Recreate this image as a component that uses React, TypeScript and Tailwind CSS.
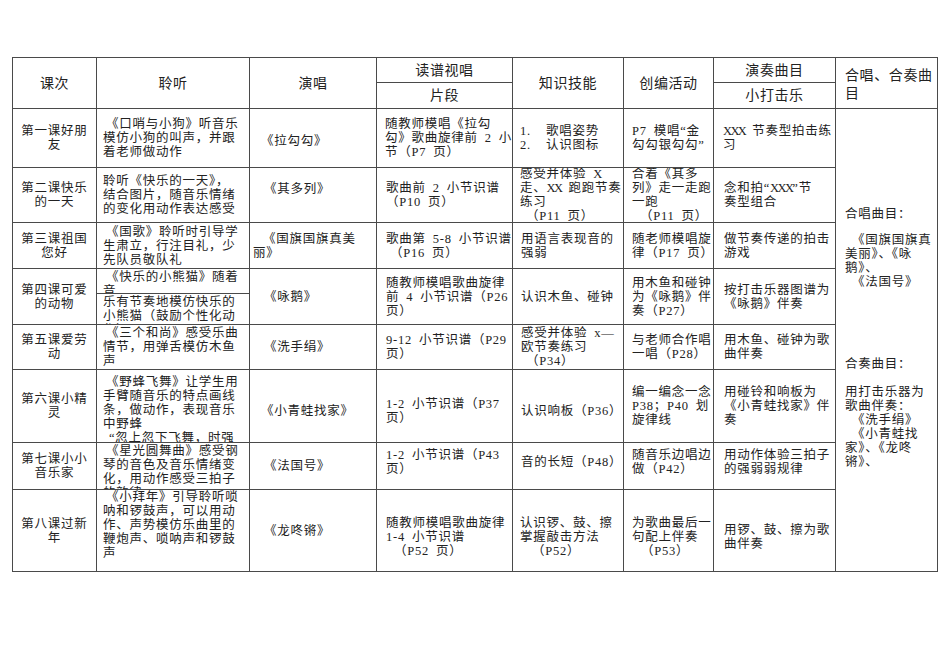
import React from "react";

/**
 * 一年级音乐教学进度表
 * Word-style table, fixed row heights, text clipped to cells
 */

// half-width spaces like the original document's font
const sp = (s: React.ReactNode) => (typeof s === "string" ? s.replace(/ /g, "\u2002") : s);
const E = "\u2002";

function L({ children, i = "" }: { children: React.ReactNode; i?: string }) {
  return <div className={`whitespace-nowrap ${i}`}>{sp(children)}</div>;
}

// narrow capital X, as in the document's half-width latin
function X({ children }: { children: string }) {
  return <span className="tracking-[-1.6px]">{children}</span>;
}

function C({
  className = "",
  children,
  center = false,
  top = false,
}: {
  className?: string;
  children: React.ReactNode;
  center?: boolean;
  top?: boolean;
}) {
  return (
    <div
      className={`flex flex-col overflow-hidden bg-white text-[12.5px] leading-[14px] tracking-[0.75px] ${
        top ? "justify-start" : "justify-center"
      } ${center ? "items-center text-center" : ""} ${className}`}
    >
      {children}
    </div>
  );
}

function H({ className = "", children }: { className?: string; children: React.ReactNode }) {
  return (
    <div className={`flex items-center justify-center bg-white text-[14px] tracking-[0.6px] ${className}`}>
      {children}
    </div>
  );
}

function Num({ n, children }: { n: string; children: React.ReactNode }) {
  return (
    <div className="flex whitespace-nowrap">
      <span className="w-[26px]">{n}</span>
      {children}
    </div>
  );
}

export default function App() {
  return (
    <div className="h-[672px] w-[950px] bg-white pl-[12px] pt-[57px] font-['Liberation_Serif','Noto_Sans_CJK_SC',serif] text-[#222]">
      <div className="grid w-[926px] grid-cols-[83px_152px_126px_135px_110px_89px_121px_101px] grid-rows-[24px_25px_58px_54px_45px_24px_30px_44px_72px_46px_81px] gap-px border border-[#4a4a4a] bg-[#4a4a4a]">
        {/* Header */}
        <H className="col-start-1 row-start-1 row-span-2">课次</H>
        <H className="col-start-2 row-start-1 row-span-2">聆听</H>
        <H className="col-start-3 row-start-1 row-span-2">演唱</H>
        <H className="col-start-4 row-start-1">读谱视唱</H>
        <H className="col-start-4 row-start-2">片段</H>
        <H className="col-start-5 row-start-1 row-span-2">知识技能</H>
        <H className="col-start-6 row-start-1 row-span-2">创编活动</H>
        <H className="col-start-7 row-start-1">演奏曲目</H>
        <H className="col-start-7 row-start-2">小打击乐</H>
        <div className="col-start-8 row-start-1 row-span-2 flex flex-col justify-center bg-white pl-[9px] pt-[4px] text-[14px] leading-[18px] tracking-[0.6px]">
          <L>合唱、合奏曲</L>
          <L>目</L>
        </div>

        {/* 第一课 */}
        <C className="col-start-1 row-start-3" center>
          <L>第一课好朋</L>
          <L>友</L>
        </C>
        <C className="col-start-2 row-start-3 pl-[6px]">
          <L i="pl-[3px]">《口哨与小狗》听音乐</L>
          <L>模仿小狗的叫声，并跟</L>
          <L>着老师做动作</L>
        </C>
        <C className="col-start-3 row-start-3 pl-[3px] pt-[6px]">
          <L i="pl-[8px]">《拉勾勾》</L>
        </C>
        <C className="col-start-4 row-start-3 pl-[8px]">
          <L>随教师模唱《拉勾</L>
          <L>勾》歌曲旋律前 2 小</L>
          <L>节（P7 页）</L>
        </C>
        <C className="col-start-5 row-start-3 pl-[7px]">
          <Num n="1.">歌唱姿势</Num>
          <Num n="2.">认识图标</Num>
        </C>
        <C className="col-start-6 row-start-3 pl-[8px]">
          <L>P7 模唱“金</L>
          <L>勾勾银勾勾”</L>
        </C>
        <C className="col-start-7 row-start-3 pl-[9px]">
          <L>
            <X>XXX</X>
            {E}节奏型拍击练
          </L>
          <L>习</L>
        </C>

        {/* 第二课 */}
        <C className="col-start-1 row-start-4" center>
          <L>第二课快乐</L>
          <L>的一天</L>
        </C>
        <C className="col-start-2 row-start-4 pl-[6px]">
          <L>聆听《快乐的一天》，</L>
          <L>结合图片，随音乐情绪</L>
          <L>的变化用动作表达感受</L>
        </C>
        <C className="col-start-3 row-start-4 pl-[3px] pb-[13px]">
          <L i="pl-[11px]">《其多列》</L>
        </C>
        <C className="col-start-4 row-start-4 pl-[9px]">
          <L>歌曲前 2 小节识谱</L>
          <L>（P10 页）</L>
        </C>
        <C className="col-start-5 row-start-4 pl-[7px]">
          <L>
            感受并体验{E}
            <X>X</X>
          </L>
          <L>
            走、<X>XX</X>
            {E}跑跑节奏
          </L>
          <L>练习</L>
          <L i="pl-[6px]">（P11 页）</L>
        </C>
        <C className="col-start-6 row-start-4 pl-[8px]">
          <L>合着《其多</L>
          <L>列》走一走跑</L>
          <L>一跑</L>
          <L i="pl-[8px]">（P11 页）</L>
        </C>
        <C className="col-start-7 row-start-4 pl-[10px]">
          <L>
            念和拍“<X>XXX</X>”节
          </L>
          <L>奏型组合</L>
        </C>

        {/* 第三课 */}
        <C className="col-start-1 row-start-5" center>
          <L>第三课祖国</L>
          <L>您好</L>
        </C>
        <C className="col-start-2 row-start-5 pl-[6px]">
          <L i="pl-[3px]">《国歌》聆听时引导学</L>
          <L>生肃立，行注目礼，少</L>
          <L>先队员敬队礼</L>
        </C>
        <C className="col-start-3 row-start-5 pl-[3px]">
          <L i="pl-[10px]">《国旗国旗真美</L>
          <L>丽》</L>
        </C>
        <C className="col-start-4 row-start-5 pl-[9px]">
          <L>歌曲第 5-8 小节识谱</L>
          <L i="pl-[4px]">（P16 页）</L>
        </C>
        <C className="col-start-5 row-start-5 pl-[8px]">
          <L>用语言表现音的</L>
          <L>强弱</L>
        </C>
        <C className="col-start-6 row-start-5 pl-[8px]">
          <L>随老师模唱旋</L>
          <L>律（P17 页）</L>
        </C>
        <C className="col-start-7 row-start-5 pl-[10px]">
          <L>做节奏传递的拍击</L>
          <L>游戏</L>
        </C>

        {/* 第四课 */}
        <C className="col-start-1 row-start-6 row-span-2" center>
          <L>第四课可爱</L>
          <L>的动物</L>
        </C>
        <C className="col-start-2 row-start-6 pl-[6px] pt-[1px]" top>
          <L i="pl-[3px]">《快乐的小熊猫》随着</L>
          <L>音</L>
        </C>
        <C className="col-start-2 row-start-7 pl-[6px] pt-[1px]" top>
          <L>乐有节奏地模仿快乐的</L>
          <L>小熊猫（鼓励个性化动</L>
          <L>作）</L>
        </C>
        <C className="col-start-3 row-start-6 row-span-2 pl-[3px]">
          <L i="pl-[11px]">《咏鹅》</L>
        </C>
        <C className="col-start-4 row-start-6 row-span-2 pl-[9px]">
          <L>随教师模唱歌曲旋律</L>
          <L>前 4 小节识谱（P26</L>
          <L>页）</L>
        </C>
        <C className="col-start-5 row-start-6 row-span-2 pl-[8px]">
          <L>认识木鱼、碰钟</L>
        </C>
        <C className="col-start-6 row-start-6 row-span-2 pl-[8px]">
          <L>用木鱼和碰钟</L>
          <L>为《咏鹅》伴</L>
          <L>奏（P27）</L>
        </C>
        <C className="col-start-7 row-start-6 row-span-2 pl-[10px]">
          <L>按打击乐器图谱为</L>
          <L>《咏鹅》伴奏</L>
        </C>

        {/* 第五课 */}
        <C className="col-start-1 row-start-8" center>
          <L>第五课爱劳</L>
          <L>动</L>
        </C>
        <C className="col-start-2 row-start-8 pl-[6px]">
          <L i="pl-[3px]">《三个和尚》感受乐曲</L>
          <L>情节，用弹舌模仿木鱼</L>
          <L>声</L>
        </C>
        <C className="col-start-3 row-start-8 pl-[3px]">
          <L i="pl-[11px]">《洗手绢》</L>
        </C>
        <C className="col-start-4 row-start-8 pl-[9px]">
          <L>9-12 小节识谱（P29</L>
          <L>页）</L>
        </C>
        <C className="col-start-5 row-start-8 pl-[8px]">
          <L>感受并体验 x—</L>
          <L>欧节奏练习</L>
          <L i="pl-[5px]">（P34）</L>
        </C>
        <C className="col-start-6 row-start-8 pl-[8px]">
          <L>与老师合作唱</L>
          <L>一唱（P28）</L>
        </C>
        <C className="col-start-7 row-start-8 pl-[10px]">
          <L>用木鱼、碰钟为歌</L>
          <L>曲伴奏</L>
        </C>

        {/* 第六课 */}
        <C className="col-start-1 row-start-9" center>
          <L>第六课小精</L>
          <L>灵</L>
        </C>
        <C className="col-start-2 row-start-9 pl-[6px] pt-[5px]" top>
          <L i="pl-[3px]">《野蜂飞舞》让学生用</L>
          <L>手臂随音乐的特点画线</L>
          <L>条，做动作，表现音乐</L>
          <L>中野蜂</L>
          <L i="pl-[6px]">“忽上忽下飞舞，时强</L>
        </C>
        <C className="col-start-3 row-start-9 pl-[3px] pt-[10px]">
          <L i="pl-[8px]">《小青蛙找家》</L>
        </C>
        <C className="col-start-4 row-start-9 pl-[9px] pt-[10px]">
          <L>1-2 小节识谱（P37</L>
          <L>页）</L>
        </C>
        <C className="col-start-5 row-start-9 pl-[8px] pt-[10px]">
          <L>认识响板（P36）</L>
        </C>
        <C className="col-start-6 row-start-9 pl-[8px]">
          <L>编一编念一念</L>
          <L>P38；P40 划</L>
          <L>旋律线</L>
        </C>
        <C className="col-start-7 row-start-9 pl-[10px]">
          <L>用碰铃和响板为</L>
          <L>《小青蛙找家》伴</L>
          <L>奏</L>
        </C>

        {/* 第七课 */}
        <C className="col-start-1 row-start-10" center>
          <L>第七课小小</L>
          <L>音乐家</L>
        </C>
        <C className="col-start-2 row-start-10 pl-[6px] pt-[1px]" top>
          <L i="pl-[3px]">《星光圆舞曲》感受钢</L>
          <L>琴的音色及音乐情绪变</L>
          <L>化，用动作感受三拍子</L>
          <L>的韵律。</L>
        </C>
        <C className="col-start-3 row-start-10 pl-[3px]">
          <L i="pl-[11px]">《法国号》</L>
        </C>
        <C className="col-start-4 row-start-10 pl-[9px] pb-[8px]">
          <L>1-2 小节识谱（P43</L>
          <L>页）</L>
        </C>
        <C className="col-start-5 row-start-10 pl-[8px] pb-[8px]">
          <L>音的长短（P48）</L>
        </C>
        <C className="col-start-6 row-start-10 pl-[8px] pb-[8px]">
          <L>随音乐边唱边</L>
          <L>做（P42）</L>
        </C>
        <C className="col-start-7 row-start-10 pl-[10px] pb-[8px]">
          <L>用动作体验三拍子</L>
          <L>的强弱弱规律</L>
        </C>

        {/* 第八课 */}
        <C className="col-start-1 row-start-11" center>
          <L>第八课过新</L>
          <L>年</L>
        </C>
        <C className="col-start-2 row-start-11 pl-[6px] pt-[0px]" top>
          <L i="pl-[3px]">《小拜年》引导聆听唢</L>
          <L>呐和锣鼓声，可以用动</L>
          <L>作、声势模仿乐曲里的</L>
          <L>鞭炮声、唢呐声和锣鼓</L>
          <L>声</L>
        </C>
        <C className="col-start-3 row-start-11 pl-[3px]">
          <L i="pl-[11px]">《龙咚锵》</L>
        </C>
        <C className="col-start-4 row-start-11 pl-[9px] pt-[12px]">
          <L>随教师模唱歌曲旋律</L>
          <L>1-4 小节识谱</L>
          <L i="pl-[8px]">（P52 页）</L>
        </C>
        <C className="col-start-5 row-start-11 pl-[7px] pt-[12px]">
          <L>认识锣、鼓、擦</L>
          <L>掌握敲击方法</L>
          <L i="pl-[12px]">（P52）</L>
        </C>
        <C className="col-start-6 row-start-11 pl-[8px] pt-[12px]">
          <L>为歌曲最后一</L>
          <L>句配上伴奏</L>
          <L i="pl-[9px]">（P53）</L>
        </C>
        <C className="col-start-7 row-start-11 pl-[10px] pt-[12px]">
          <L>用锣、鼓、擦为歌</L>
          <L>曲伴奏</L>
        </C>

        {/* 合唱、合奏曲目 */}
        <div className="col-start-8 row-start-3 row-span-9 overflow-hidden bg-white pl-[9px] pt-[98px] text-[12.5px] leading-[14px] tracking-[0.75px]">
          <L>合唱曲目：</L>
          <div className="mt-[12px]">
            <L i="pl-[7px]">《国旗国旗真</L>
            <L>美丽》、《咏</L>
            <L>鹅》、</L>
            <L i="pl-[7px]">《法国号》</L>
          </div>
          <div className="mt-[68px]">
            <L>合奏曲目：</L>
          </div>
          <div className="mt-[14px]">
            <L>用打击乐器为</L>
            <L>歌曲伴奏：</L>
            <L i="pl-[7px]">《洗手绢》</L>
            <L i="pl-[7px]">《小青蛙找</L>
            <L>家》、《龙咚</L>
            <L>锵》、</L>
          </div>
        </div>
      </div>
    </div>
  );
}
